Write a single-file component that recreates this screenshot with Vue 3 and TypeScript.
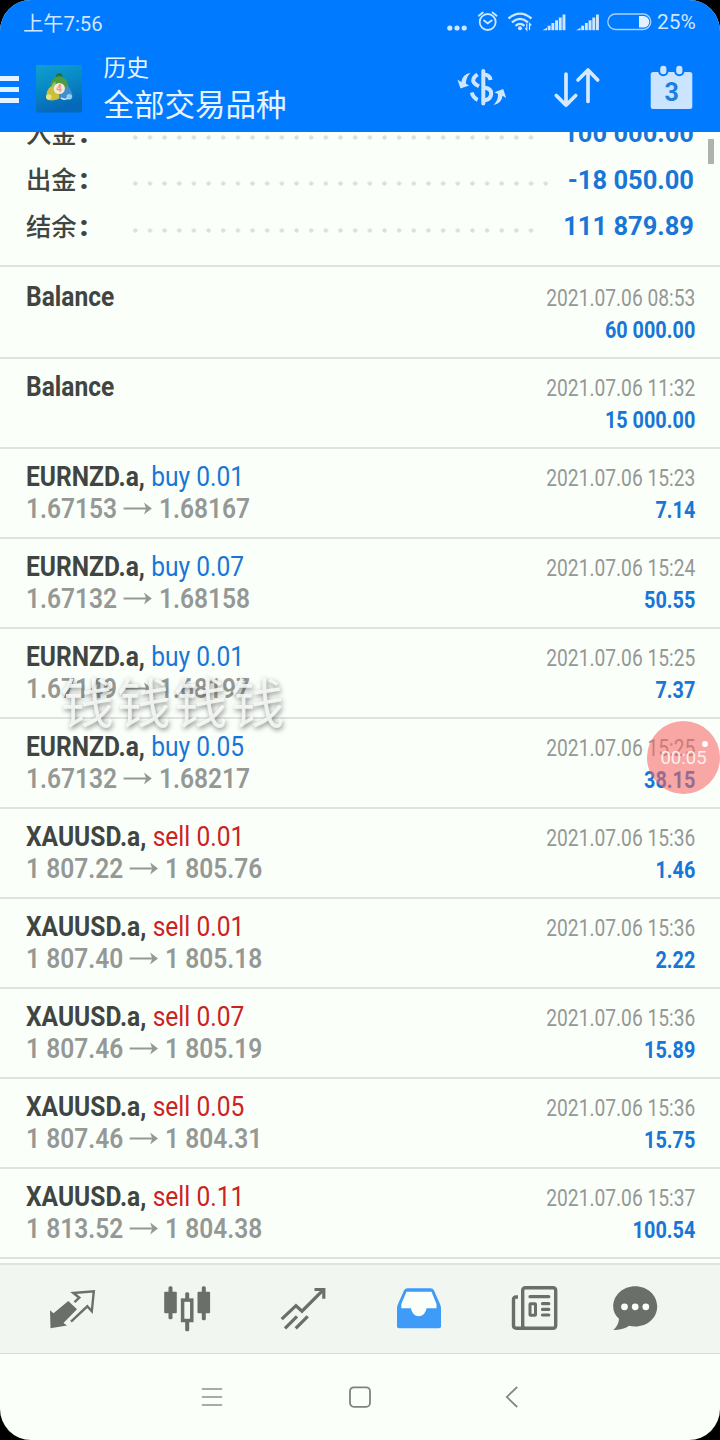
<script setup lang="ts">
type Side = 'buy' | 'sell'

interface Deal {
  symbol: string
  side?: Side
  volume?: string
  open?: string
  close?: string
  time: string
  profit: string
}

interface SummaryRow { label: string; value: string; dots: number }

const summary: SummaryRow[] = [
  { label: '入金', value: '100 000.00', dots: 28 },
  { label: '出金', value: '-18 050.00', dots: 29 },
  { label: '结余', value: '111 879.89', dots: 28 },
]

const DOT_STEP = 14.667

const deals: Deal[] = [
  { symbol: 'Balance', time: '2021.07.06 08:53', profit: '60 000.00' },
  { symbol: 'Balance', time: '2021.07.06 11:32', profit: '15 000.00' },
  { symbol: 'EURNZD.a', side: 'buy', volume: '0.01', open: '1.67153', close: '1.68167', time: '2021.07.06 15:23', profit: '7.14' },
  { symbol: 'EURNZD.a', side: 'buy', volume: '0.07', open: '1.67132', close: '1.68158', time: '2021.07.06 15:24', profit: '50.55' },
  { symbol: 'EURNZD.a', side: 'buy', volume: '0.01', open: '1.67149', close: '1.68197', time: '2021.07.06 15:25', profit: '7.37' },
  { symbol: 'EURNZD.a', side: 'buy', volume: '0.05', open: '1.67132', close: '1.68217', time: '2021.07.06 15:25', profit: '38.15' },
  { symbol: 'XAUUSD.a', side: 'sell', volume: '0.01', open: '1 807.22', close: '1 805.76', time: '2021.07.06 15:36', profit: '1.46' },
  { symbol: 'XAUUSD.a', side: 'sell', volume: '0.01', open: '1 807.40', close: '1 805.18', time: '2021.07.06 15:36', profit: '2.22' },
  { symbol: 'XAUUSD.a', side: 'sell', volume: '0.07', open: '1 807.46', close: '1 805.19', time: '2021.07.06 15:36', profit: '15.89' },
  { symbol: 'XAUUSD.a', side: 'sell', volume: '0.05', open: '1 807.46', close: '1 804.31', time: '2021.07.06 15:36', profit: '15.75' },
  { symbol: 'XAUUSD.a', side: 'sell', volume: '0.11', open: '1 813.52', close: '1 804.38', time: '2021.07.06 15:37', profit: '100.54' },
]
</script>

<template>
  <div class="phone">
    <header class="top">
      <div class="status">
        <span class="clock">上午7:56</span>
        <svg class="status-icons" width="205" height="24" viewBox="0 0 205 24">
          <g fill="#cfe6ff">
            <circle cx="2.8" cy="17" r="2.6" />
            <circle cx="10" cy="17" r="2.6" />
            <circle cx="17.2" cy="17" r="2.6" />
          </g>
          <!-- 闹钟 -->
          <g fill="none" stroke="#cfe6ff" stroke-width="1.8" stroke-linecap="round">
            <circle cx="40.7" cy="11" r="8" />
            <path d="M37 9.5l3.7 2.8 4-2.8M31.8 4.7l4-3.2M49.6 4.7l-4-3.2" />
          </g>
          <!-- WiFi -->
          <g fill="none" stroke="#cfe6ff" stroke-width="2.3">
            <path d="M61.5 7.5q11.5-9.8 23 0" />
            <path d="M65 11.3q8-6.8 16 0" />
            <path d="M68.5 14.9q4.5-4 9 0" />
          </g>
          <circle cx="73" cy="17.3" r="2" fill="#cfe6ff" />
          <path d="M79.8 12.5v6.5l-1.6-2M82.5 19v-6.5l1.8 2" stroke="#cfe6ff" stroke-width="1.2" fill="none" />
          <!-- 信号 -->
          <g v-for="x in [95.5, 129]" :key="x" :transform="`translate(${x} 0)`" fill="#cfe6ff">
            <path d="M0 19.2l4.5-2.5v2.5z" />
            <rect x="5.2" y="14.7" width="2.9" height="4.5" />
            <rect x="8.9" y="12" width="2.9" height="7.2" />
            <rect x="12.6" y="9.3" width="2.9" height="9.9" />
            <rect x="16.3" y="6.5" width="2.9" height="12.7" />
            <rect x="20" y="3.5" width="2.9" height="15.7" />
          </g>
          <rect x="160.8" y="3" width="43" height="15.5" rx="7.7" fill="none" stroke="#a9d2ff" stroke-width="1.3" />
          <path d="M192 5h4.5a5.8 5.8 0 0 1 0 11.6H192z" fill="#e2f1ff" />
        </svg>
        <span class="battery">25%</span>
      </div>

      <div class="toolbar">
        <div class="burger"><i></i><i></i><i></i></div>
        <svg class="logo" width="46" height="48" viewBox="0 0 46 48">
          <defs>
            <linearGradient id="lg-bg" x1="0" y1="0" x2="0.3" y2="1">
              <stop offset="0" stop-color="#0fa0d0" />
              <stop offset="0.5" stop-color="#0888c4" />
              <stop offset="1" stop-color="#0568b8" />
            </linearGradient>
          </defs>
          <rect width="46" height="47.5" rx="1.5" fill="url(#lg-bg)" />
          <circle cx="23.3" cy="11.5" r="3.2" fill="#25703f" />
          <path d="M23.3 11q8 1 9.5 12h-19q1.5-11 9.5-12z" fill="#4f9a45" />
          <path d="M15 24q.5-6 5-7.5l-2 7z" fill="#8dc66a" />
          <path d="M15 21.500q-4.500 3-4.800 10l1.500 3.500q8 1.500 12.500-2l-3-10z" fill="#c9bf3a" />
          <circle cx="12.8" cy="32" r="2.8" fill="#efe07a" />
          <path d="M31.5 21q5 4 5 11.5-6 4-13.500.5l2-9z" fill="#3f8fce" />
          <circle cx="33.3" cy="31.7" r="2.8" fill="#96cdf0" />
          <path d="M25 33q4 2.5 7 0" stroke="#bfe4f6" stroke-width="1.5" fill="none" />
          <circle cx="23.3" cy="23.5" r="5.6" fill="#f3eadc" />
          <text x="23.2" y="27.2" class="logo-digit">4</text>
        </svg>
        <div class="titles">
          <div class="title-small">历史</div>
          <div class="title-large">全部交易品种</div>
        </div>
        <div class="actions">
          <svg width="52" height="52" viewBox="0 0 52 52">
            <g fill="none" stroke="#cfe6ff" stroke-width="4" stroke-linecap="round">
              <path d="M26.3 9v32.5" />
              <path d="M20.5 12.3q-6 4.5-3.700 8 1.500 2.200 5.200 4" stroke-linecap="butt" />
              <path d="M27 12.5q6 .5 6.500 5.500" stroke-linecap="butt" />
              <path d="M27 25.5q7.7 1 7.2 6.5-.5 5.5-7 6.5" />
              <path d="M14.700 30.500q1.500 5.500 6 7.300" stroke-linecap="butt" />
            </g>
            <path d="M13.5 10.7q-8.500 2-9 9.300l-4-2.300 3 8.900 8.700-3.200-3.200-1.700q-.5-5.500 4.500-11z" fill="#cfe6ff" />
            <path d="M36.5 43q8.500-2 9-9.200l3.700 2.200-3-8.900-8.700 3.200 3.500 1.700q.5 6-4.500 11z" fill="#cfe6ff" />
          </svg>
          <svg width="52" height="52" viewBox="0 0 52 52">
            <g fill="none" stroke="#d4e9ff" stroke-width="3.7" stroke-linecap="round" stroke-linejoin="round">
              <path d="M15 12v31M5.3 33.500l9.700 9.800 9.700-9.800" />
              <path d="M37 39.5V8.5M27 18L37 8l9.700 10" />
            </g>
          </svg>
          <svg width="52" height="52" viewBox="0 0 52 52">
            <rect x="5.7" y="10" width="41.6" height="37" rx="2.5" fill="#cbe4ff" />
            <rect x="14.2" y="2.8" width="8.2" height="10.5" rx="4" fill="#cbe4ff" stroke="#007aff" stroke-width="2" />
            <rect x="30.2" y="2.8" width="8.2" height="10.5" rx="4" fill="#cbe4ff" stroke="#007aff" stroke-width="2" />
            <text x="26.7" y="39" class="cal-digit">3</text>
          </svg>
        </div>
      </div>
    </header>

    <main class="history">
      <section class="summary">
        <div v-for="row in summary" :key="row.label" class="sum-row">
          <span class="sum-label">{{ row.label }}<b>:</b></span>
          <span class="leader" :style="{ width: row.dots * DOT_STEP + 'px' }"></span>
          <span class="sum-value">{{ row.value }}</span>
        </div>
      </section>

      <section class="deals">
        <article v-for="(d, i) in deals" :key="i" class="deal">
          <div class="left">
            <div class="name">
              <b>{{ d.symbol }}<template v-if="d.side">,</template></b>
              <span v-if="d.side" :class="d.side">{{ d.side }} {{ d.volume }}</span>
            </div>
            <div v-if="d.open" class="prices">
              <span>{{ d.open }}</span>
              <svg class="arrow" width="33" height="16" viewBox="0 0 33 16">
                <path d="M0 7.500h30" stroke="#959895" stroke-width="1.8" />
                <path d="M23.5 1.500l9 6-9 6 2.500-6z" fill="#959895" />
              </svg>
              <span>{{ d.close }}</span>
            </div>
          </div>
          <div class="right">
            <div class="time">{{ d.time }}</div>
            <div class="profit">{{ d.profit }}</div>
          </div>
        </article>
      </section>
      <div class="scrollbar"></div>
    </main>

    <nav class="tabs">
      <div class="tab">
        <svg width="52" height="52" viewBox="0 0 52 52">
          <path d="M4 27.3l3.500 3L22.3 18l8.700 8.300L17.500 40l3.500 2.500-16.500 2.800z" fill="#6a6f69" />
          <path d="M28.500 19.2l4.800-4.500-6-4.700 20.500-1.700-2 20-4.500-5L25 38.700" fill="none" stroke="#6a6f69" stroke-width="2.4" />
        </svg>
      </div>
      <div class="tab">
        <svg width="52" height="52" viewBox="0 0 52 52">
          <g fill="#6a6f69">
            <rect x="3.2" y="8.8" width="12.6" height="21.4" rx="1" />
            <rect x="7.5" y="3.3" width="4" height="33" rx="1.5" />
            <rect x="36.5" y="8.8" width="12.6" height="21.4" rx="1" />
            <rect x="40.8" y="3.3" width="4" height="34" rx="1.5" />
            <rect x="24.2" y="9.3" width="4" height="7" rx="1.5" />
            <rect x="24.2" y="38" width="4" height="10.3" rx="1.5" />
          </g>
          <rect x="21.6" y="17.1" width="9.2" height="20.4" fill="none" stroke="#6a6f69" stroke-width="3.5" />
        </svg>
      </div>
      <div class="tab">
        <svg width="52" height="52" viewBox="0 0 52 52">
          <g fill="none" stroke="#6a6f69" stroke-width="3.2">
            <path d="M4.7 36.2L19 22.7l6 5.500L46.3 6.900" />
            <path d="M37.5 6.5h9.300v9.300" />
            <path d="M8 45.3l12-12M18.7 45.3l12-12" />
          </g>
        </svg>
      </div>
      <div class="tab">
        <svg width="52" height="52" viewBox="0 0 52 52">
          <path
            fill="#3f9bf8"
            d="M14.5 5.3h23q2.500 0 3.500 2.200l6 13.500q1 2.500 1 5v17.300q0 2-2 2H6q-2 0-2-2V26q0-2.500 1-5l6-13.500q1-2.200 3.500-2.200z"
          />
          <path d="M13.5 8.7L8.3 21v4.2H18a7.8 9 0 0 0 15.500 0h10V21L38.5 8.7z" fill="#fafffa" />
        </svg>
      </div>
      <div class="tab">
        <svg width="52" height="52" viewBox="0 0 52 52">
          <g fill="none" stroke="#6a6f69" stroke-width="3.4">
            <rect x="14.7" y="4.7" width="33" height="40.5" rx="2.5" />
            <path d="M10 14H8q-2.500 0-2.500 2.500v26Q5.500 45.200 8.500 45.200H17" />
            <rect x="22" y="20.7" width="5.5" height="11.5" rx="0.5" stroke-width="3" />
            <path d="M22 13.7h18.800M34.500 20.7h6.300M34.500 26.4h6.300M34.500 32h6.300" stroke-width="3.2" stroke-linecap="round" />
          </g>
        </svg>
      </div>
      <div class="tab last">
        <svg width="52" height="52" viewBox="0 0 52 52">
          <path d="M26.2 3.2c12.300 0 22 9 22 20.300s-9.700 20-22 20q-4 0-6-.8-6.500 4.300-16 4.300 5.500-4.500 5.800-11.200-5.800-5-5.800-12.300c0-11.300 9.700-20.300 22-20.300z" fill="#6a6f69" />
          <g fill="#fafffa">
            <circle cx="15.5" cy="23.8" r="3.4" />
            <circle cx="26.2" cy="23.8" r="3.4" />
            <circle cx="36.8" cy="23.8" r="3.4" />
          </g>
        </svg>
      </div>
    </nav>

    <footer class="system">
      <svg width="24" height="24" viewBox="0 0 24 24">
        <path d="M2.5 4h19M2.500 12h19M2.500 20h19" fill="none" stroke="#8d918d" stroke-width="1.7" stroke-linecap="round" />
      </svg>
      <svg width="24" height="24" viewBox="0 0 24 24">
        <rect x="2" y="2.3" width="20" height="19.5" rx="3.8" fill="none" stroke="#7f837f" stroke-width="1.8" />
      </svg>
      <svg class="back" width="24" height="24" viewBox="0 0 24 24">
        <path d="M17.2 2L6.8 12l10.400 10" fill="none" stroke="#858985" stroke-width="1.8" />
      </svg>
    </footer>

    <div class="watermark">钱钱钱钱</div>
    <div class="recorder"><span>00:05</span></div>
  </div>
</template>

<style>
body {
  background: #000;
}
</style>

<style scoped>
.phone {
  position: relative;
  display: flex;
  flex-direction: column;
  width: 720px;
  height: 1440px;
  overflow: hidden;
  border-radius: 31px;
  background: #fafffa;
  font-family: Roboto, "Noto Sans CJK SC", sans-serif;
}
svg { display: block; flex: none; }

.top { height: 132px; flex: none; background: #007aff; color: #e6f4ff; }
.status {
  display: flex;
  align-items: center;
  height: 44px;
  padding: 0 24px 0 23px;
  color: #cfe6ff;
}
.clock { flex: 1; margin-top: -1px; font-size: 20.3px; }
.status-icons { margin-top: 2px; }
.battery { width: 44px; padding-left: 5px; box-sizing: border-box; font-size: 20.8px; }
.toolbar { display: flex; align-items: center; height: 88px; }
.burger { display: flex; flex-direction: column; gap: 6px; width: 36px; margin-top: 2px; }
.burger i { width: 18.5px; height: 5px; background: #e3f3ff; }
.logo { margin-top: 2px; }
.logo-digit { font: bold 10px Roboto, sans-serif; fill: #e8a070; text-anchor: middle; }
.titles { margin: 5px 0 0 21.5px; width: 333px; flex: none; }
.title-small { font-size: 22.8px; line-height: 30px; }
.title-large { font-size: 30.5px; line-height: 44px; }
.actions { display: flex; gap: 42px; margin-left: 20px; }
.cal-digit { font: 700 25px Roboto, sans-serif; fill: #1c7fe0; text-anchor: middle; }

.history { position: relative; flex: 1; min-height: 0; overflow: hidden; }
.summary { height: 155px; margin-top: -22px; border-bottom: 2px solid #dfe3df; }
.sum-row { display: flex; align-items: center; height: 46.5px; padding: 0 26px; }
.sum-label { width: 102px; flex: none; margin-top: -3px; color: #414541; font-size: 25.3px; font-weight: 500; }
.sum-label b { margin-left: 3px; font-size: 30px; line-height: 1; font-weight: 900; }
.leader {
  height: 5px;
  margin-top: 8px;
  background: radial-gradient(circle, #dce0dc 1.9px, transparent 2.4px) 0 0 / 14.667px 5px repeat-x;
}
.sum-value { flex: 1; text-align: right; white-space: nowrap; color: #1976d6; font-size: 25.5px; font-weight: 700; }

.deal {
  display: flex;
  justify-content: space-between;
  box-sizing: border-box;
  height: 90px;
  padding: 12px 25px 0 26px;
  border-bottom: 2px solid #dfe3df;
  white-space: nowrap;
}
.deal:first-child { height: 92px; padding-top: 14px; }
.left { transform: scaleX(0.877); transform-origin: 0 0; color: #414541; }
.name { height: 32px; font-size: 28px; line-height: 32px; }
.name b { font-weight: 700; margin-right: 7.3px; }
.buy { color: #1976d6; }
.sell { color: #cc2222; }
.prices { display: flex; align-items: center; gap: 7.3px; color: #959895; font-size: 28px; line-height: 32px; font-weight: 600; }
.right { margin-top: -1px; transform: scaleX(0.8); transform-origin: 100% 0; text-align: right; }
.time { height: 32px; color: #959895; font-size: 24px; line-height: 36px; }
.profit { color: #1976d6; font-size: 24.8px; font-weight: 700; line-height: 36px; }
.scrollbar { position: absolute; top: 7px; right: 6px; width: 6.5px; height: 25px; background: #aeb3ae; }

.tabs {
  display: flex;
  align-items: center;
  flex: none;
  box-sizing: border-box;
  height: 91px;
  padding: 0 41px 1px 14px;
  border-top: 2px solid #dfe3df;
  border-bottom: 1px solid #dadeda;
  background: #f2f6f1;
}
.tab { display: flex; justify-content: center; width: 115.6px; flex: none; }
.tab.last { width: 87px; }

.system {
  display: flex;
  justify-content: center;
  align-items: center;
  gap: 124px;
  flex: none;
  box-sizing: border-box;
  height: 86px;
  padding: 0 0 1px 4px;
}
.back { margin-left: 4px; }

.watermark {
  position: absolute;
  left: 60px;
  top: 668px;
  font-size: 54px;
  line-height: 76px;
  letter-spacing: 2.8px;
  color: rgba(248, 250, 248, 0.88);
  text-shadow: 1px 2px 5px rgba(60, 60, 60, 0.6);
}
.recorder {
  position: absolute;
  left: 647px;
  top: 721px;
  display: flex;
  align-items: center;
  justify-content: center;
  width: 73px;
  height: 73px;
  border-radius: 50%;
  background: rgba(247, 100, 98, 0.57);
  color: #fdeeea;
  font-size: 18.5px;
}
.recorder::after {
  content: '';
  position: absolute;
  left: 55px;
  top: 20px;
  width: 6px;
  height: 6px;
  border-radius: 50%;
  background: #fff;
}
</style>
